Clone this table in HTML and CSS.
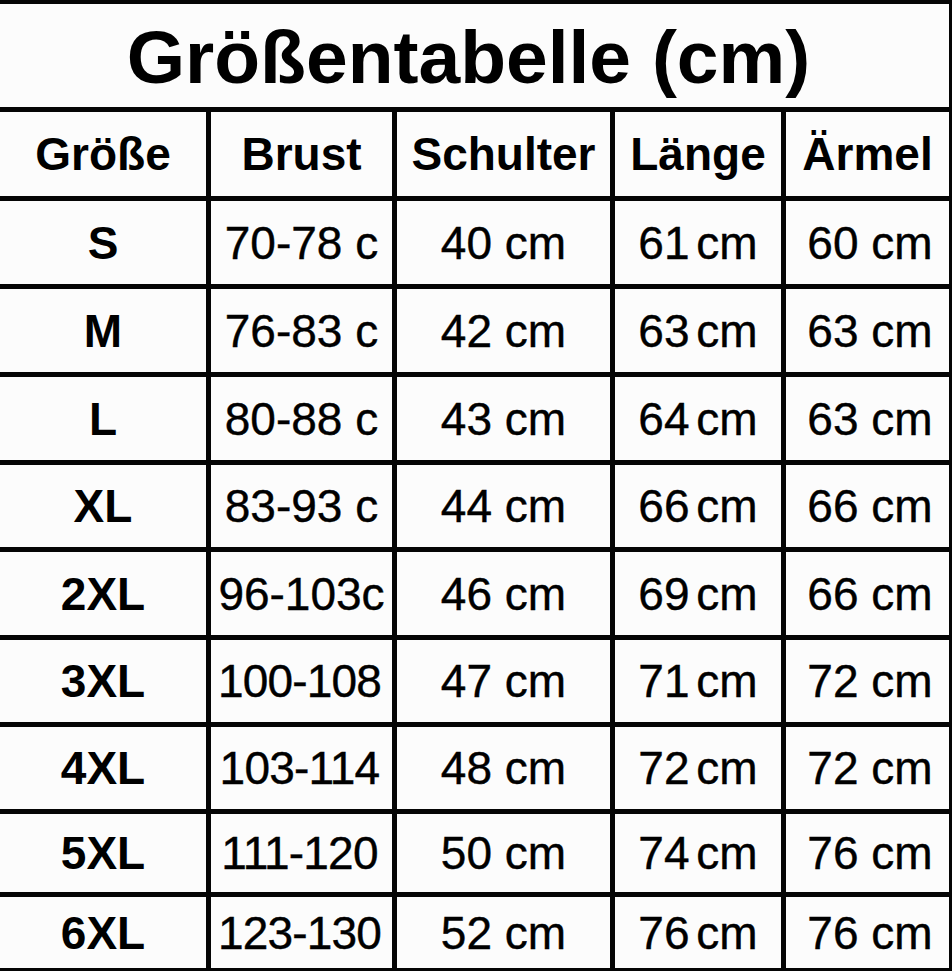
FILE: index.html
```html
<!DOCTYPE html>
<html lang="de">
<head>
<meta charset="utf-8">
<title>Größentabelle (cm)</title>
<link rel="stylesheet" href="styles.css">
</head>
<body>
<div class="chart">
  <div class="cell title">Größentabelle (cm)</div>

  <div class="cell head">Größe</div>
  <div class="cell head">Brust</div>
  <div class="cell head">Schulter</div>
  <div class="cell head">Länge</div>
  <div class="cell head">Ärmel</div>

  <div class="cell size">S</div>
  <div class="cell val">70-78 c</div>
  <div class="cell val">40 cm</div>
  <div class="cell val tight">61 cm</div>
  <div class="cell val last">60 cm</div>

  <div class="cell size">M</div>
  <div class="cell val">76-83 c</div>
  <div class="cell val">42 cm</div>
  <div class="cell val tight">63 cm</div>
  <div class="cell val last">63 cm</div>

  <div class="cell size">L</div>
  <div class="cell val">80-88 c</div>
  <div class="cell val">43 cm</div>
  <div class="cell val tight">64 cm</div>
  <div class="cell val last">63 cm</div>

  <div class="cell size">XL</div>
  <div class="cell val">83-93 c</div>
  <div class="cell val">44 cm</div>
  <div class="cell val tight">66 cm</div>
  <div class="cell val last">66 cm</div>

  <div class="cell size">2XL</div>
  <div class="cell val">96-103c</div>
  <div class="cell val">46 cm</div>
  <div class="cell val tight">69 cm</div>
  <div class="cell val last">66 cm</div>

  <div class="cell size">3XL</div>
  <div class="cell val long">100-108</div>
  <div class="cell val">47 cm</div>
  <div class="cell val tight">71 cm</div>
  <div class="cell val last">72 cm</div>

  <div class="cell size">4XL</div>
  <div class="cell val long">103-114</div>
  <div class="cell val">48 cm</div>
  <div class="cell val tight">72 cm</div>
  <div class="cell val last">72 cm</div>

  <div class="cell size">5XL</div>
  <div class="cell val long">111-120</div>
  <div class="cell val">50 cm</div>
  <div class="cell val tight">74 cm</div>
  <div class="cell val last">76 cm</div>

  <div class="cell size">6XL</div>
  <div class="cell val long">123-130</div>
  <div class="cell val">52 cm</div>
  <div class="cell val tight">76 cm</div>
  <div class="cell val last">76 cm</div>
</div>
</body>
</html>
```
FILE: styles.css
```css
html, body {
  margin: 0;
  padding: 0;
  background: #fcfcfc;
}

.chart {
  width: 952px;
  height: 971px;
  box-sizing: border-box;
  background: #050505;
  padding: 4px 3px 3px 0;
  display: grid;
  grid-template-columns: 206px 181px 213px 166px 163px;
  grid-template-rows: 103px 84px 83px 83px 83px 82px 83px 82px 82px 78px 71px;
  gap: 5px;
  font-family: "Liberation Sans", Arial, sans-serif;
  color: #000;
}

.cell {
  background: #fcfcfc;
  display: flex;
  align-items: center;
  justify-content: center;
  white-space: nowrap;
  line-height: 1;
}

.title {
  grid-column: 1 / -1;
  font-size: 75px;
  font-weight: 700;
  padding-top: 3px;
  padding-right: 12px;
  box-sizing: border-box;
}

.head {
  font-size: 46px;
  font-weight: 700;
}

.size {
  font-size: 46px;
  font-weight: 700;
}

.val {
  font-size: 46px;
  font-weight: 400;
  -webkit-text-stroke: 0.4px #000;
}

.long {
  letter-spacing: -0.8px;
  padding-right: 4px;
}

.tight {
  word-spacing: -6px;
}

.last {
  padding-left: 5px;
}
```
